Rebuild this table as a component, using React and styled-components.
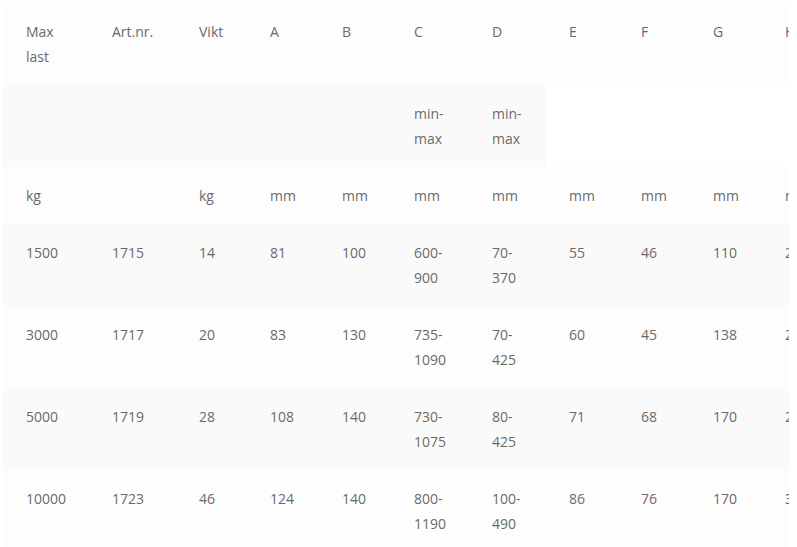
import React from 'react'
import styled, { createGlobalStyle } from 'styled-components'

const GlobalStyle = createGlobalStyle`
  html, body {
    margin: 0;
    padding: 0;
    background: #fff;
    overflow: hidden;
  }
  body {
    font-family: "Open Sans", "Noto Sans", sans-serif;
  }
`

const columns = [86, 87, 71, 72, 72, 78, 77, 72, 72, 72, 72]

const headers = ['Max last', 'Art.nr.', 'Vikt', 'A', 'B', 'C', 'D', 'E', 'F', 'G', 'H']
const ranges = ['', '', '', '', '', 'min-max', 'min-max']
const units = ['kg', '', 'kg', 'mm', 'mm', 'mm', 'mm', 'mm', 'mm', 'mm', 'mm']

const rows = [
  ['1500', '1715', '14', '81', '100', '600-900', '70-370', '55', '46', '110', '230'],
  ['3000', '1717', '20', '83', '130', '735-1090', '70-425', '60', '45', '138', '270'],
  ['5000', '1719', '28', '108', '140', '730-1075', '80-425', '71', '68', '170', '290'],
  ['10000', '1723', '46', '124', '140', '800-1190', '100-490', '86', '76', '170', '330'],
]

function SpecTable() {
  return (
    <Wrapper>
      <Table>
        <colgroup>
          {columns.map((w, i) => (
            <col key={i} style={{ width: w }} />
          ))}
        </colgroup>
        <tbody>
          <Row $shade="light">
            {headers.map((h, i) => (
              <Cell key={i}>{h}</Cell>
            ))}
          </Row>
          <Row $shade="dark">
            {ranges.map((r, i) => (
              <Cell key={i}>{r}</Cell>
            ))}
          </Row>
          <Row $shade="light">
            {units.map((u, i) => (
              <Cell key={i}>{u}</Cell>
            ))}
          </Row>
          {rows.map((row, r) => (
            <Row key={r} $shade={r % 2 === 0 ? 'dark' : 'light'}>
              {row.map((v, i) => (
                <Cell key={i}>{v}</Cell>
              ))}
            </Row>
          ))}
        </tbody>
      </Table>
    </Wrapper>
  )
}

const Wrapper = styled.div`
  margin: 3px 0 0 3px;
  width: 786px;
  overflow: hidden;
`

const Table = styled.table`
  table-layout: fixed;
  border-collapse: collapse;
  border-spacing: 0;
  width: 831px;
`

const Row = styled.tr`
  background: ${({ $shade }) => ($shade === 'dark' ? '#fafafa' : '#fdfdfd')};
`

const Cell = styled.td`
  padding: 16px 23px;
  vertical-align: top;
  font-size: 14px;
  line-height: 25px;
  color: #6a6a6a;
  white-space: normal;
`

export default function App() {
  return (
    <>
      <GlobalStyle />
      <SpecTable />
    </>
  )
}
